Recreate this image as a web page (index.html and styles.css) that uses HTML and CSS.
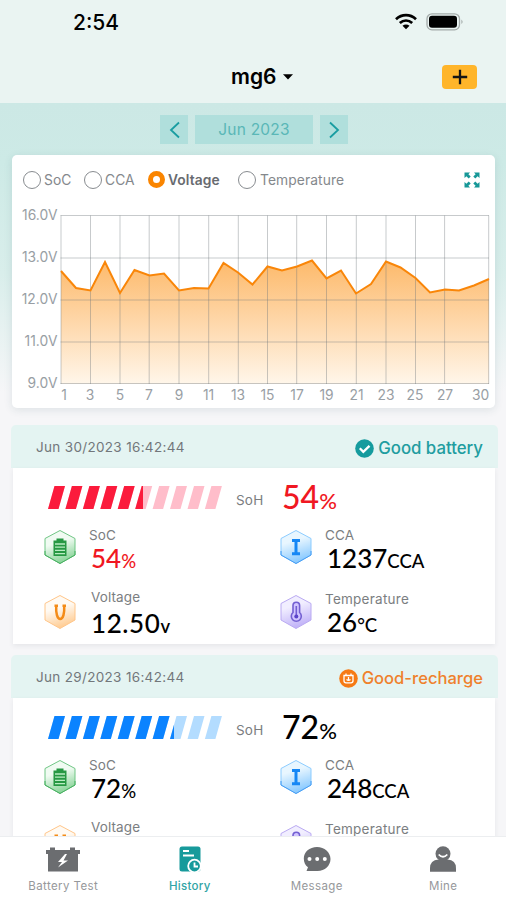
FILE: index.html
```
<!DOCTYPE html>
<html lang="en">
  <head>
    <meta charset="UTF-8" />
    <meta name="viewport" content="width=device-width, initial-scale=1.0" />
    <title>Battery History</title>
    <link rel="stylesheet" href="styles.css">
  </head>
  <body>
    <!-- Shared icons -->
    <svg class="defs" width="0" height="0">
      <defs>
        <linearGradient id="green" x1="0" y1="0" x2="0.3" y2="1">
          <stop offset="0.45" stop-color="#f0fbf2" />
          <stop offset="1" stop-color="#8ed69d" />
        </linearGradient>
        <linearGradient id="orange" x1="0" y1="0" x2="0.3" y2="1">
          <stop offset="0.45" stop-color="#fffaf3" />
          <stop offset="1" stop-color="#ffcf99" />
        </linearGradient>
        <linearGradient id="blue" x1="0" y1="0" x2="0.3" y2="1">
          <stop offset="0.4" stop-color="#e8f6ff" />
          <stop offset="1" stop-color="#8ccbff" />
        </linearGradient>
        <linearGradient id="purple" x1="0" y1="0" x2="0.3" y2="1">
          <stop offset="0.4" stop-color="#f1eeff" />
          <stop offset="1" stop-color="#c3b5f8" />
        </linearGradient>
      </defs>
      <symbol id="icon-soc" viewBox="0 0 32 36">
        <path d="M16 1.500 31 9.500V26L16 34.500 1 26V9.500Z" fill="url(#green)" stroke="#70c685" />
        <path d="M16 34.500 1 26V22M16 34.500 31 26V22" fill="none" stroke="#49b162" />
        <path d="M12.500 9.500h7v2h3v15.500h-13V11.500h3Z" fill="#269843" />
        <path d="M11 15h10M11 18.200h10M11 21.400h10M11 24.600h10" stroke="#b8ecc2" stroke-width="1.300" />
      </symbol>
      <symbol id="icon-voltage" viewBox="0 0 32 36">
        <path d="M16 1.500 31 9.500V26L16 34.500 1 26V9.500Z" fill="url(#orange)" stroke="#ffc68a" />
        <path d="M10.500 11.800h3.500M18.500 11.800h3.500M12.200 12c-.4 7 1 13 4 13s4.400-6 4-13" fill="none" stroke="#f48b17" stroke-width="2.500" />
      </symbol>
      <symbol id="icon-cca" viewBox="0 0 32 36">
        <path d="M16 1.500 31 9.500V26L16 34.500 1 26V9.500Z" fill="url(#blue)" stroke="#8cccff" />
        <path d="M16 34.500 1 26V22M16 34.500 31 26V22" fill="none" stroke="#459cf4" />
        <path d="M12 11.500h8M12 24.800h8M16 11.500v13" fill="none" stroke="#1687f5" stroke-width="3" />
      </symbol>
      <symbol id="icon-temp" viewBox="0 0 32 36">
        <path d="M16 1.500 31 9.500V26L16 34.500 1 26V9.500Z" fill="url(#purple)" stroke="#baaaf2" />
        <path d="M13 18.500v-7a3.300 3.300 0 0 1 6.600 0v7a5 5 0 1 1-6.600 0Z" fill="#d1c5ff" stroke="#7460d2" stroke-width="1.600" />
        <path d="M16.300 12V21" stroke="#7460d2" stroke-width="1.600" />
        <circle cx="16.300" cy="22.600" r="2" fill="#5c44ca" />
      </symbol>
      <symbol id="stripes" viewBox="0 0 174 23">
        <path d="M6.500 0h10.500l-6.500 23H0ZM23.900 0h10.500l-6.500 23h-10.500ZM41.400 0h10.500l-6.500 23h-10.500ZM58.800 0h10.500l-6.500 23h-10.500ZM76.200 0h10.500l-6.500 23h-10.500ZM93.700 0h10.500l-6.500 23h-10.500ZM111.100 0h10.500l-6.500 23h-10.500ZM128.500 0h10.500l-6.500 23h-10.500ZM146 0h10.500l-6.500 23h-10.500ZM163.400 0h10.500l-6.500 23h-10.500Z" />
      </symbol>
    </svg>

    <div class="app">
      <header class="header">
        <div class="status-bar">
          <span class="clock">2:54</span>
          <svg class="wifi" width="22" height="17" viewBox="0 0 22 17" fill="none" stroke="#000" stroke-width="2.700">
            <path d="M1 6.200c5.800-5.400 14.200-5.400 20 0M4.800 10c3.700-3.300 8.700-3.300 12.400 0" />
            <path d="M7.500 12.800c2-1.800 5-1.800 7 0L11 16.300Z" fill="#000" stroke="none" />
          </svg>
          <svg class="battery" width="38" height="18" viewBox="0 0 38 18">
            <rect x="1" y="0.800" width="32.500" height="16" rx="5" fill="none" stroke="#a3aaa9" stroke-width="1.300" />
            <rect x="3" y="2.800" width="28" height="12" rx="3" />
            <path d="M35.500 6.500q2 2.300 0 4.600Z" fill="#929998" />
          </svg>
        </div>
        <div class="title-bar">
          <h1 class="title">mg6</h1>
          <svg class="caret" width="10" height="6" viewBox="0 0 10 6"><path d="M0 .300h10L5 5.500Z" /></svg>
          <button class="add-btn" aria-label="Add">
            <svg width="16" height="16" viewBox="0 0 16 16"><path d="M8 .8v14.400M.800 8h14.400" stroke="#151515" stroke-width="2.300" /></svg>
          </button>
        </div>
      </header>

      <main class="content">
        <!-- Month picker -->
        <div class="month-picker">
          <button class="month-btn" aria-label="Previous month">
            <svg width="11" height="18" viewBox="0 0 11 18"><path d="M10 1.500 2 9l8 7.500" /></svg>
          </button>
          <div class="month">Jun 2023</div>
          <button class="month-btn" aria-label="Next month">
            <svg width="11" height="18" viewBox="0 0 11 18"><path d="M1 1.500 9 9l-8 7.500" /></svg>
          </button>
        </div>

        <!-- Chart -->
        <section class="chart-card">
          <div class="legend">
            <span class="option soc"><i class="radio"></i>SoC</span>
            <span class="option cca"><i class="radio"></i>CCA</span>
            <span class="option voltage active"><i class="radio"></i>Voltage</span>
            <span class="option temperature"><i class="radio"></i>Temperature</span>
            <svg class="expand" width="16" height="16" viewBox="0 0 16 16" fill="#179898">
              <path id="arrow" d="M.5.500h5.500L4.400 2.200l2.300 2.300-2 2-2.300-2.300L.5 6Z" />
              <use href="#arrow" transform="matrix(-1 0 0 1 16 0)" />
              <use href="#arrow" transform="matrix(1 0 0 -1 0 16)" />
              <use href="#arrow" transform="rotate(180 8 8)" />
            </svg>
          </div>
          <svg class="chart" width="483" height="203" viewBox="12 205 483 203">
            <defs>
              <linearGradient id="area" gradientUnits="userSpaceOnUse" x1="0" y1="260" x2="0" y2="384">
                <stop offset="0" stop-color="#fdb96a" />
                <stop offset="1" stop-color="#fff6ea" />
              </linearGradient>
            </defs>
            <path d="M61 384V271L76 288 90.500 290.500 105 262 120 293 134.500 270 149.500 275.500 164 273.500 179 290.500 194 288 208.500 288.500 223.500 263 238 272.500 252.500 284.500 267.500 266.500 282 270.500 297 266.500 312 260.500 326.500 278.500 341 270.500 356 293.500 371 284 386 261.500 400.500 267.500 415.500 278 430 292.500 445 289.500 459 290.500 474 285.500 489 279V384Z" fill="url(#area)" />
            <path class="grid" d="M60.500 215.500H489M60.500 258H489M60.500 300H489M60.500 342H489M60.500 383.500H489M61 215.500V384M90.500 215.500V384M120 215.500V384M149.200 215.500V384M179 215.500V384M208.700 215.500V384M238.300 215.500V384M267.500 215.500V384M296.700 215.500V384M326.500 215.500V384M356.300 215.500V384M386 215.500V384M415.500 215.500V384M444.600 215.500V384M488.700 215.500V384" />
            <path class="line" d="M61 271 76 288 90.500 290.500 105 262 120 293 134.500 270 149.500 275.500 164 273.500 179 290.500 194 288 208.500 288.500 223.500 263 238 272.500 252.500 284.500 267.500 266.500 282 270.500 297 266.500 312 260.500 326.500 278.500 341 270.500 356 293.500 371 284 386 261.500 400.500 267.500 415.500 278 430 292.500 445 289.500 459 290.500 474 285.500 489 279" />
            <g class="axis y-axis">
              <text x="57.500" y="220">16.0V</text>
              <text x="57.500" y="262">13.0V</text>
              <text x="57.500" y="304">12.0V</text>
              <text x="57.500" y="346">11.0V</text>
              <text x="57.500" y="387.500">9.0V</text>
            </g>
            <g class="axis x-axis">
              <text x="64" y="399.500">1</text>
              <text x="90" y="399.500">3</text>
              <text x="120" y="399.500">5</text>
              <text x="149" y="399.500">7</text>
              <text x="179" y="399.500">9</text>
              <text x="208.500" y="399.500">11</text>
              <text x="238" y="399.500">13</text>
              <text x="267.500" y="399.500">15</text>
              <text x="297" y="399.500">17</text>
              <text x="326.500" y="399.500">19</text>
              <text x="356.500" y="399.500">21</text>
              <text x="386" y="399.500">23</text>
              <text x="415" y="399.500">25</text>
              <text x="445" y="399.500">27</text>
              <text x="480.500" y="399.500">30</text>
            </g>
          </svg>
        </section>

        <!-- Records -->
        <article class="record low">
          <div class="record-header">
            <time>Jun 30/2023 16:42:44</time>
            <span class="state">
              <svg width="19" height="19" viewBox="0 0 19 19">
                <circle cx="9.500" cy="9.500" r="9.300" fill="#159b9e" />
                <path d="m4.800 9.300 3.500 3.500 6.200-6" fill="none" stroke="#fff" stroke-width="2.300" />
              </svg>
              Good battery
            </span>
          </div>
          <div class="record-body">
            <div class="health">
              <svg class="health-bar" width="174" height="23">
                <clipPath id="fill54"><rect width="95" height="23" /></clipPath>
                <use href="#stripes" width="174" height="23" fill="#ffbdca" />
                <use href="#stripes" width="174" height="23" fill="#fb1b3c" clip-path="url(#fill54)" />
              </svg>
              <span class="health-label">SoH</span>
              <span class="health-value">54<small>%</small></span>
            </div>
            <div class="stats">
              <div class="stat">
                <svg class="stat-icon"><use href="#icon-soc" /></svg>
                <div class="stat-text"><span class="label">SoC</span><span class="value warn">54<small>%</small></span></div>
              </div>
              <div class="stat">
                <svg class="stat-icon"><use href="#icon-cca" /></svg>
                <div class="stat-text"><span class="label">CCA</span><span class="value">1237<small>CCA</small></span></div>
              </div>
              <div class="stat">
                <svg class="stat-icon"><use href="#icon-voltage" /></svg>
                <div class="stat-text volts"><span class="label">Voltage</span><span class="value">12.50<small>v</small></span></div>
              </div>
              <div class="stat">
                <svg class="stat-icon"><use href="#icon-temp" /></svg>
                <div class="stat-text degrees"><span class="label">Temperature</span><span class="value">26<small>°C</small></span></div>
              </div>
            </div>
          </div>
        </article>

        <article class="record">
          <div class="record-header">
            <time>Jun 29/2023 16:42:44</time>
            <span class="state recharge">
              <svg width="19" height="19" viewBox="0 0 19 19">
                <circle cx="9.500" cy="9.500" r="9.300" fill="#f67a14" />
                <path d="M7 4.500v2M12 4.500v2M5 6.500h9v5.300q0 2-2 2H7q-2 0-2-2ZM7.500 10.500q2 1.500 4 0M9.500 8v3" fill="none" stroke="#fff" stroke-width="1.300" />
              </svg>
              Good-recharge
            </span>
          </div>
          <div class="record-body">
            <div class="health">
              <svg class="health-bar" width="174" height="23">
                <clipPath id="fill72"><rect width="126" height="23" /></clipPath>
                <use href="#stripes" width="174" height="23" fill="#b3dcff" />
                <use href="#stripes" width="174" height="23" fill="#0b83ff" clip-path="url(#fill72)" />
              </svg>
              <span class="health-label">SoH</span>
              <span class="health-value">72<small>%</small></span>
            </div>
            <div class="stats">
              <div class="stat">
                <svg class="stat-icon"><use href="#icon-soc" /></svg>
                <div class="stat-text"><span class="label">SoC</span><span class="value">72<small>%</small></span></div>
              </div>
              <div class="stat">
                <svg class="stat-icon"><use href="#icon-cca" /></svg>
                <div class="stat-text"><span class="label">CCA</span><span class="value">248<small>CCA</small></span></div>
              </div>
              <div class="stat">
                <svg class="stat-icon"><use href="#icon-voltage" /></svg>
                <div class="stat-text volts"><span class="label">Voltage</span></div>
              </div>
              <div class="stat">
                <svg class="stat-icon"><use href="#icon-temp" /></svg>
                <div class="stat-text degrees"><span class="label">Temperature</span></div>
              </div>
            </div>
          </div>
        </article>
      </main>

      <!-- Bottom tabs -->
      <nav class="tabs">
        <a class="tab">
          <svg width="36" height="28" viewBox="0 0 36 28">
            <path d="M1 4h4V1.500h5V4h15V1.500h5V4h5v4h-2v17.500H3V8H1Z" fill="#6b6d70" />
            <path d="m20 8-7 8h4l-1.500 2L13 21.500l10-7h-4.500L22 8Z" fill="#fff" />
          </svg>
          <span>Battery Test</span>
        </a>
        <a class="tab active">
          <svg width="24" height="28" viewBox="0 0 24 28">
            <rect x="1.500" y="0.500" width="21" height="25" rx="2.500" fill="#179a9b" />
            <path d="M5 5h6M5 9.500h11" stroke="#fff" stroke-width="1.800" />
            <circle cx="16.500" cy="20" r="6.300" fill="#179a9b" stroke="#fff" stroke-width="1.800" />
            <path d="M16.500 16.500V20.500h3.500" fill="none" stroke="#fff" stroke-width="1.800" />
          </svg>
          <span>History</span>
        </a>
        <a class="tab message">
          <svg width="28" height="28" viewBox="0 0 28 28">
            <path d="M14 1C6.500 1 .8 6 .8 12.500c0 4 1.600 6.800 4.200 8.800L3.500 25h11C22 25 27.500 19.500 27.500 13S21.500 1 14 1Z" fill="#6b6d70" />
            <g fill="#fff"><circle cx="6.500" cy="13" r="2" /><circle cx="14.200" cy="13" r="2" /><circle cx="21.800" cy="13" r="2" /></g>
          </svg>
          <span>Message</span>
        </a>
        <a class="tab mine">
          <svg width="28" height="28" viewBox="0 0 28 28">
            <circle cx="14" cy="7.800" r="7.500" fill="#6b6d70" />
            <path d="M1 25.800v-3.500Q1 14 9.500 13.500h9Q27 14 27 22.300v3.500Z" fill="#6b6d70" />
            <path d="M9.700 8.500q4.300 4.500 8.600 0" fill="none" stroke="#fff" stroke-width="1.800" />
          </svg>
          <span>Mine</span>
        </a>
      </nav>
    </div>
  </body>
</html>
```
FILE: styles.css
```
* {
  box-sizing: border-box;
}

body {
  margin: 0;
  font-family: Inter, "Liberation Sans", sans-serif;
  color: #000;
}

button {
  border: none;
  padding: 0;
  display: flex;
  align-items: center;
  justify-content: center;
}

svg {
  display: block;
  flex-shrink: 0;
}

.defs {
  position: absolute;
}

.app {
  width: 506px;
  height: 900px;
  display: flex;
  flex-direction: column;
  overflow: hidden;
}

/* Header */
.header {
  height: 103px;
  background: #eaf4f2;
  flex-shrink: 0;
}

.status-bar {
  height: 50px;
  display: flex;
  align-items: flex-start;
  padding: 13px 42px 0 73px;
}

.clock {
  font-size: 21px;
  line-height: 20px;
  font-weight: 500;
  letter-spacing: 0;
  margin-right: auto;
}

.wifi {
  margin-right: 9px;
}

.title-bar {
  height: 53px;
  display: flex;
  align-items: center;
  padding: 0 29px 0 231px;
}

.title {
  margin: 0;
  font-size: 21px;
  font-weight: 600;
}

.caret {
  margin: 0 auto 0 7px;
}

.add-btn {
  width: 35px;
  height: 24px;
  border-radius: 4px;
  background: #ffb52b;
}

.content {
  flex: 1;
  min-height: 0;
  overflow: hidden;
  padding-top: 12px;
  background: linear-gradient(#cce8e5, #cdeae6 60px, #d9eeeb 170px, #f6f6f8 290px);
}

/* Month picker */
.month-picker {
  display: flex;
  gap: 7px;
  height: 29px;
  padding-left: 160px;
}

.month-btn {
  width: 28px;
  background: #b0dfdc;
}

.month-btn path {
  fill: none;
  stroke: #199da1;
  stroke-width: 1.8;
}

.month {
  width: 118px;
  background: #b0dfdc;
  color: #5ab7b7;
  font-size: 15.5px;
  line-height: 29px;
  text-align: center;
  letter-spacing: 0.2px;
}

/* Chart */
.chart-card {
  width: 483px;
  height: 253px;
  margin: 11px 0 17px 12px;
  background: #fff;
  border-radius: 5px;
  box-shadow: 0 2px 8px rgba(40, 80, 90, 0.12);
}

.legend {
  height: 50px;
  display: flex;
  align-items: center;
  padding: 0 15px 1px 11px;
}

.option {
  display: flex;
  align-items: center;
  gap: 3px;
  font-size: 13.8px;
  color: #84888c;
  letter-spacing: 0.1px;
}

.soc {
  width: 61px;
}

.cca {
  width: 64px;
}

.voltage {
  width: 90px;
}

.temperature {
  gap: 4px;
}

.option.active {
  color: #686b70;
  font-weight: 600;
}

.radio {
  width: 18px;
  height: 18px;
  border: 1px solid #888c90;
  border-radius: 50%;
}

.active .radio {
  width: 17px;
  height: 17px;
  border: 5px solid #fa8500;
}

.expand {
  margin-left: auto;
}

.grid {
  fill: none;
  stroke: #6b7379;
  stroke-opacity: 0.38;
}

.line {
  fill: none;
  stroke: #f98609;
  stroke-width: 2;
}

.axis {
  font-size: 13.8px;
  fill: #989ea4;
}

.y-axis {
  text-anchor: end;
}

.x-axis {
  text-anchor: middle;
}

/* Records */
.record {
  width: 487px;
  height: 219px;
  margin: 0 0 11px 11px;
}

.record-header {
  height: 43px;
  display: flex;
  align-items: center;
  justify-content: space-between;
  padding: 3px 15px 0 25px;
  background: #e4f4f2;
  border-radius: 5px 5px 0 0;
}

.record-header time {
  padding-bottom: 3px;
  color: #72777b;
  font-size: 13.5px;
  letter-spacing: 0.32px;
}

.state {
  display: flex;
  align-items: center;
  gap: 4px;
  color: #219da0;
  font-size: 16.8px;
  font-weight: 500;
}

.recharge {
  color: #ef812c;
  font-size: 16.6px;
}

.record-body {
  height: 176px;
  margin: 0 3px 0 2px;
  padding: 18px 0 0 31px;
  background: #fff;
  box-shadow: 0 2px 5px rgba(40, 50, 60, 0.08);
}

.health {
  height: 23px;
  display: flex;
  align-items: center;
}

.health-bar {
  margin: 0 14px 0 4px;
}

.health-label {
  width: 46px;
  padding-top: 5px;
  color: #7a7d80;
  font-size: 13.5px;
  letter-spacing: 0.2px;
}

.health-value {
  padding-top: 2px;
  font-family: Lato, "Liberation Sans", sans-serif;
  font-size: 32px;
  font-weight: 500;
  line-height: 25px;
}

.health-value small {
  font-size: 22px;
}

.low .health-value,
.warn {
  color: #f01722;
}

.stats {
  display: grid;
  grid-template-columns: 236px 1fr;
  grid-auto-rows: 65px;
  padding-top: 20px;
}

.stat {
  display: flex;
  gap: 13px;
}

.stat-icon {
  width: 32px;
  height: 36px;
}

.stat-text {
  display: flex;
  flex-direction: column;
}

.label {
  height: 13px;
  font-size: 13.5px;
  line-height: 13px;
  color: #7b7e81;
  letter-spacing: 0.1px;
}

.value {
  padding: 0 0 0 2px;
  font-family: Lato, "Liberation Sans", sans-serif;
  font-size: 26px;
  font-weight: 500;
  line-height: 32px;
}

.value small {
  font-size: 18.5px;
}

.volts {
  margin-left: 2px;
  margin-top: -3px;
}

.volts .value {
  padding: 3px 0 0;
  letter-spacing: 0.6px;
}

.volts small {
  font-weight: 600;
}

.degrees {
  margin-top: -1px;
}

.degrees .label {
  letter-spacing: 0.25px;
}

/* Bottom tabs */
.tabs {
  height: 64px;
  display: grid;
  grid-template-columns: repeat(4, 1fr);
  padding-top: 9px;
  background: #fff;
  border-top: 1px solid #eceef0;
  flex-shrink: 0;
}

.tab {
  display: flex;
  flex-direction: column;
  align-items: center;
  color: #96989b;
  font-size: 11.5px;
  font-weight: 400;
  letter-spacing: 0.4px;
}

.tab span {
  margin-top: 5px;
}

.message,
.mine {
  padding-left: 1px;
}

.tab.active {
  color: #31a4a5;
  font-weight: 500;
  letter-spacing: 0.3px;
}
```
